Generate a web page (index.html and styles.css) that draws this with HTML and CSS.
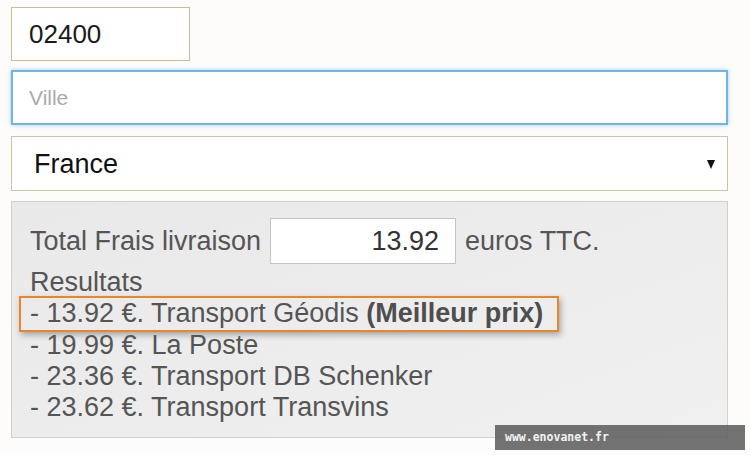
FILE: index.html
```html
<!DOCTYPE html>
<html>
  <head>
    <title>Frais de livraison</title>
    <meta name="viewport" content="width=device-width, initial-scale=1.0" />
    <link rel="stylesheet" href="styles.css">
  </head>
  <body>
    <form class="shipping">
      <input class="input" id="zip" type="text" value="02400" />
      <input class="input" id="city" type="text" placeholder="Ville" />
      <div class="select-wrap">
        <select id="country">
          <option>France</option>
        </select>
        <svg class="arrow" width="8" height="9" viewBox="0 0 8 9"><path d="M0 0H8L4 9Z" fill="#111"/></svg>
      </div>
      <div class="panel">
        <div class="total">
          <span>Total Frais livraison</span>
          <input id="total" type="text" value="13.92" />
          <span>euros TTC.</span>
        </div>
        <div class="results">
          <p>Resultats</p>
          <p class="best">- 13.92 €. Transport Géodis <b>(Meilleur prix)</b></p>
          <p>- 19.99 €. La Poste</p>
          <p>- 23.36 €. Transport DB Schenker</p>
          <p>- 23.62 €. Transport Transvins</p>
        </div>
      </div>
    </form>
    <div class="watermark">www.enovanet.fr</div>
  </body>
</html>
```
FILE: styles.css
```css
body {
  margin: 0;
  padding: 7px 0 0 11px;
  background-color: #fdfcfa;
  font-family: "Liberation Sans", Arial, sans-serif;
}
.shipping {
  width: 717px;
  display: flex;
  flex-direction: column;
  align-items: flex-start;
}
.input {
  box-sizing: border-box;
  font-family: "Liberation Sans", Arial, sans-serif;
  background-color: #fff;
  outline: 0;
}
#zip {
  width: 179px;
  height: 54px;
  border: 1px solid #c8bd98;
  padding: 0 0 0 17px;
  font-size: 26px;
  color: #1a1a1a;
}
#city {
  margin-top: 9px;
  width: 717px;
  height: 55px;
  border: 2px solid #6db7e3;
  box-shadow: 0 0 4px rgba(102, 175, 233, 0.6);
  padding: 0 0 0 16px;
  font-size: 21px;
}
#city::placeholder {
  color: #ababab;
}
.select-wrap {
  margin-top: 11px;
  box-sizing: border-box;
  width: 717px;
  height: 55px;
  border: 1px solid #cdc3a3;
  background-color: #fff;
  display: flex;
  align-items: center;
  padding-right: 12px;
}
#country {
  flex: 1;
  appearance: none;
  -webkit-appearance: none;
  border: 0;
  background: transparent;
  outline: 0;
  font-family: "Liberation Sans", Arial, sans-serif;
  font-size: 27px;
  color: #111;
  padding: 0 0 0 22px;
  margin: 0;
}
.arrow {
  margin-top: 1px;
}
.panel {
  margin-top: 10px;
  box-sizing: border-box;
  width: 717px;
  height: 237px;
  border: 1px solid #d0d0d0;
  background: linear-gradient(160deg, #e9e9e9, #f0f0f0);
  padding: 16px 18px 13px;
  color: #555;
  font-size: 27px;
}
.total {
  display: flex;
  align-items: center;
  gap: 9px;
}
#total {
  box-sizing: border-box;
  width: 186px;
  height: 46px;
  border: 1px solid #c4c4c4;
  background-color: #fff;
  text-align: right;
  padding: 0 16px 0 0;
  font-family: "Liberation Sans", Arial, sans-serif;
  font-size: 27px;
  color: #333;
  outline: 0;
}
.results {
  margin-top: 3px;
}
.results p {
  margin: 0;
  line-height: 31.3px;
}
.results .best {
  display: inline-block;
  margin: -2px 0 -2px -11px;
  padding: 0 14px 0 9px;
  border: 2px solid #e8862e;
  box-shadow: 2px 3px 6px rgba(0, 0, 0, 0.3);
}
.results .best b {
  color: #4e4e4e;
}
.watermark {
  position: absolute;
  left: 495px;
  top: 425px;
  width: 250px;
  height: 25px;
  box-sizing: border-box;
  padding-left: 10px;
  background-color: rgba(95, 95, 95, 0.88);
  color: #f2f2f2;
  font-family: "DejaVu Sans Mono", monospace;
  font-size: 11.5px;
  font-weight: bold;
  line-height: 25px;
}
```
